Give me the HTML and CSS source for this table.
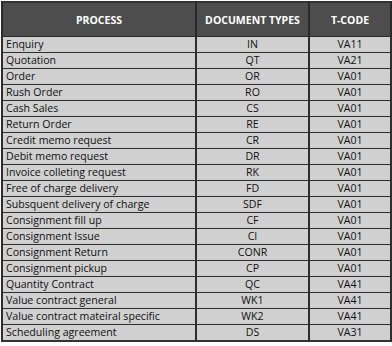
FILE: index.html
```html
<!DOCTYPE html>
<html>
<head>
<meta charset="utf-8">
<link rel="stylesheet" href="styles.css">
</head>
<body>
<table class="sap">
  <colgroup><col class="c1"><col class="c2"><col class="c3"></colgroup>
  <thead>
    <tr><th>PROCESS</th><th>DOCUMENT TYPES</th><th>T-CODE</th></tr>
  </thead>
  <tbody>
    <tr><td>Enquiry</td><td>IN</td><td>VA11</td></tr>
    <tr><td>Quotation</td><td>QT</td><td>VA21</td></tr>
    <tr><td>Order</td><td>OR</td><td>VA01</td></tr>
    <tr><td>Rush Order</td><td>RO</td><td>VA01</td></tr>
    <tr><td>Cash Sales</td><td>CS</td><td>VA01</td></tr>
    <tr><td>Return Order</td><td>RE</td><td>VA01</td></tr>
    <tr><td>Credit memo request</td><td>CR</td><td>VA01</td></tr>
    <tr><td>Debit memo request</td><td>DR</td><td>VA01</td></tr>
    <tr><td>Invoice colleting request</td><td>RK</td><td>VA01</td></tr>
    <tr><td>Free of charge delivery</td><td>FD</td><td>VA01</td></tr>
    <tr><td>Subsquent delivery of charge</td><td>SDF</td><td>VA01</td></tr>
    <tr><td>Consignment fill up</td><td>CF</td><td>VA01</td></tr>
    <tr><td>Consignment Issue</td><td>CI</td><td>VA01</td></tr>
    <tr><td>Consignment Return</td><td>CONR</td><td>VA01</td></tr>
    <tr><td>Consignment pickup</td><td>CP</td><td>VA01</td></tr>
    <tr><td>Quantity Contract</td><td>QC</td><td>VA41</td></tr>
    <tr><td>Value contract general</td><td>WK1</td><td>VA41</td></tr>
    <tr><td>Value contract mateiral specific</td><td>WK2</td><td>VA41</td></tr>
    <tr><td>Scheduling agreement</td><td>DS</td><td>VA31</td></tr>
  </tbody>
</table>
</body>
</html>
```
FILE: styles.css
```css
html, body {
  margin: 0;
  padding: 0;
  background: #ffffff;
}
body {
  padding: 1px 0 0 1px;
}
.sap {
  border-collapse: collapse;
  table-layout: fixed;
  width: 389px;
  font-family: "Open Sans", "Liberation Sans", sans-serif;
  font-size: 10.6px;
  color: #111;
  border: 2px solid #333;
}
.c1 { width: 194px; }
.c2 { width: 113px; }
.c3 { width: 82px; }
.sap th {
  background: #4d4d4d;
  color: #ffffff;
  font-weight: bold;
  height: 33px;
  padding: 0;
  font-size: 10.5px;
  text-align: center;
  border: 1px solid #2a2a2a;
  border-left-width: 2px;
  border-right-width: 2px;
}
.sap td {
  background: #d0d0d0;
  height: 15px;
  padding: 0 0 0 3px;
  line-height: 15px;
  border: 1px solid #2e2e2e;
  border-left-width: 2px;
  border-right-width: 2px;
  white-space: nowrap;
}
.sap td + td {
  text-align: center;
  padding: 0;
}
```
